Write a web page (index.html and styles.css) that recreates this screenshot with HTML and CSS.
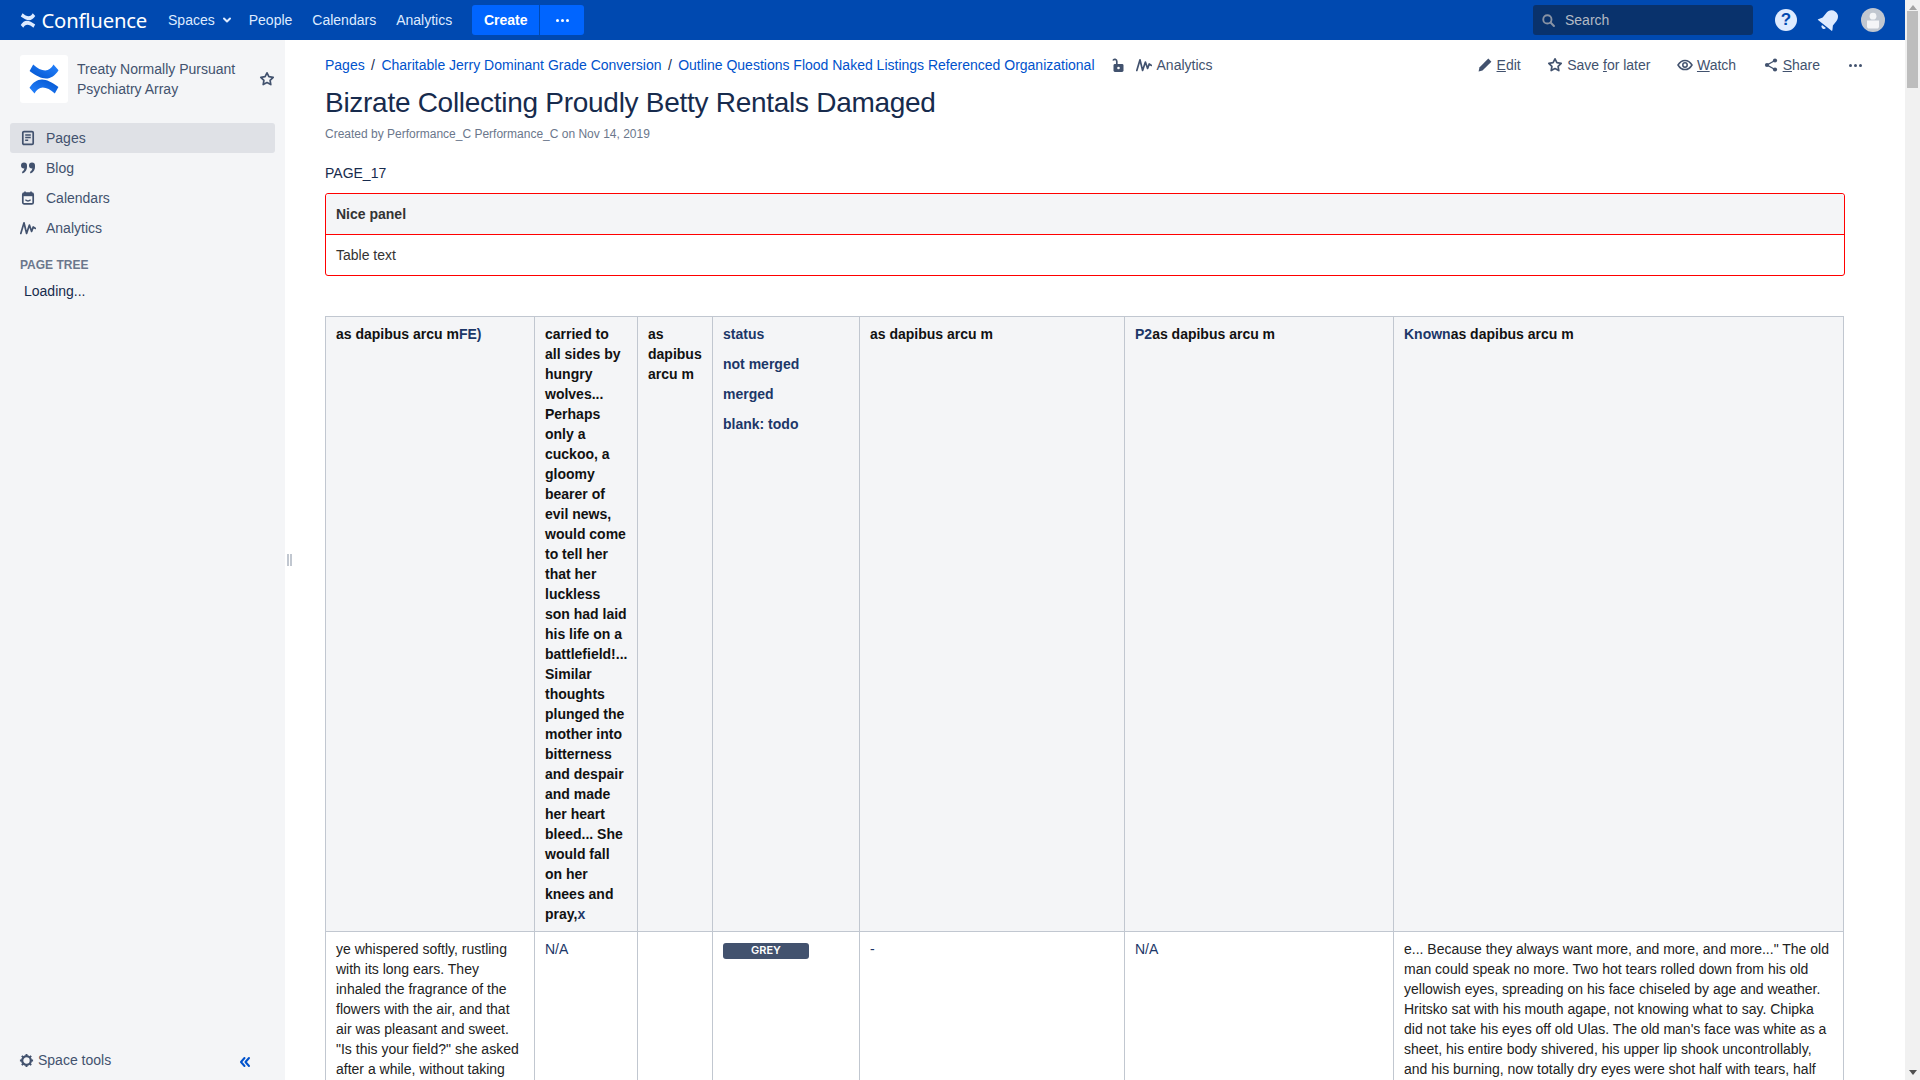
FILE: index.html
```html
<!DOCTYPE html>
<html lang="en">
<head>
<meta charset="utf-8">
<title>Bizrate Collecting Proudly Betty Rentals Damaged</title>
<link rel="stylesheet" href="styles.css">
</head>
<body>
<svg class="defs" width="0" height="0" aria-hidden="true">
  <defs>
    <linearGradient id="cf" x1="0" y1="1" x2="1" y2="0">
      <stop offset="0" stop-color="#0052cc"/><stop offset="1" stop-color="#2684ff"/>
    </linearGradient>
    <symbol id="i-conf" viewBox="0 0 30 30">
      <path d="M4.200 .4 L.6 7 C7 11.800 12.500 14.500 17 14.500 C21.800 14.500 26.200 11.500 29.500 6.200 L24.500 .4 C22.500 4 19.800 6.400 16.200 6.400 C12.500 6.400 8.200 4.200 4.200 .4 Z"/>
      <path transform="rotate(180 15 15)" d="M4.200 .4 L.6 7 C7 11.800 12.500 14.500 17 14.500 C21.800 14.500 26.200 11.500 29.500 6.200 L24.500 .4 C22.500 4 19.800 6.400 16.200 6.400 C12.500 6.400 8.200 4.200 4.200 .4 Z"/>
    </symbol>
    <symbol id="i-analytics" viewBox="0 0 16 16"><path d="M.8 13.500 L4 2.800 L6.600 13.500 L9.400 5 L11.600 11.500 L13.200 7 L15.400 8.400" fill="none" stroke="currentColor" stroke-width="1.700" stroke-linecap="round" stroke-linejoin="round"/></symbol>
    <symbol id="i-star" viewBox="0 0 16 16"><path d="M8 1.800l1.900 3.900 4.300.6-3.100 3 .7 4.300L8 11.600l-3.800 2 .7-4.300-3.100-3 4.300-.6z" fill="none" stroke="currentColor" stroke-width="1.700" stroke-linejoin="round"/></symbol>
  </defs>
</svg>
<div class="window">
  <div class="app">
    <header class="topbar">
      <a class="brand">
        <svg class="brand-mark"><use href="#i-conf"/></svg>
        <span class="brand-name">Confluence</span>
      </a>
      <nav class="topnav">
        <a class="topnav-item">Spaces
          <svg class="caret" viewBox="0 0 10 10"><path d="M2 3.500l3 3 3-3" fill="none" stroke="currentColor" stroke-width="2" stroke-linecap="round" stroke-linejoin="round"/></svg>
        </a>
        <a class="topnav-item">People</a>
        <a class="topnav-item">Calendars</a>
        <a class="topnav-item">Analytics</a>
      </nav>
      <div class="create-group">
        <button class="create-btn">Create</button>
        <button class="create-more"><span class="dots"><i></i><i></i><i></i></span></button>
      </div>
      <div class="top-right">
        <div class="search">
          <svg class="search-icon" viewBox="0 0 16 16"><circle cx="6.800" cy="6.800" r="4.400" fill="none" stroke="currentColor" stroke-width="2"/><path d="M10.200 10.200l3.600 3.600" stroke="currentColor" stroke-width="2.200" stroke-linecap="round"/></svg>
          <span class="search-text">Search</span>
        </div>
        <span class="help">?</span>
        <svg class="bell" viewBox="0 0 24 24"><g transform="rotate(38 12 12)" fill="#deebff"><path d="M12 1.500c-4.200 0-6.500 3-6.500 7.200v5.300L3 18v.8h18V18l-2.500-4V8.700c0-4.200-2.300-7.200-6.500-7.200z"/><path d="M9.500 20.200h5a2.500 2.500 0 0 1-5 0z"/></g></svg>
        <svg class="avatar" viewBox="0 0 24 24"><circle cx="12" cy="12" r="12" fill="#c1c7d0"/><circle cx="12" cy="8.200" r="3.400" fill="#f4f5f7"/><path d="M6 12.600h12V19a5 5 0 0 1-1 1.400H7A5 5 0 0 1 6 19z" fill="#f4f5f7"/></svg>
      </div>
    </header>
    <div class="workspace">
      <aside class="sidebar">
        <div class="space-head">
          <div class="space-logo"><svg class="space-mark"><use href="#i-conf"/></svg></div>
          <div class="space-name">Treaty Normally Pursuant Psychiatry Array</div>
          <svg class="space-star"><use href="#i-star"/></svg>
        </div>
        <nav class="side-nav">
          <a class="side-item is-active">
            <svg class="side-icon" viewBox="0 0 16 16"><rect x="2.800" y="1.600" width="10.400" height="12.800" rx="1.200" fill="none" stroke="currentColor" stroke-width="1.700"/><path d="M5.200 5h5.600M5.200 7.600h5.600M5.200 10.200h3" stroke="currentColor" stroke-width="1.500"/></svg>
            <span>Pages</span>
          </a>
          <a class="side-item">
            <svg class="side-icon" viewBox="0 0 16 16"><g fill="currentColor"><circle cx="4" cy="5.400" r="3"/><circle cx="12" cy="5.400" r="3"/><path d="M4.600 6h2.400c.2 3.600-1.200 6.200-4.400 7.400l-.7-1.400C3.800 11 4.700 9 4.600 6zM12.600 6H15c.2 3.600-1.200 6.200-4.400 7.400l-.7-1.400c1.900-1 2.800-3 2.700-6z"/></g></svg>
            <span>Blog</span>
          </a>
          <a class="side-item">
            <svg class="side-icon" viewBox="0 0 16 16"><rect x="2.800" y="3" width="10.400" height="10.800" rx="1.400" fill="none" stroke="currentColor" stroke-width="1.700"/><path d="M3 3h10v3.200H3z" fill="currentColor"/><path d="M5 1.600v2.400M11 1.600v2.400" stroke="currentColor" stroke-width="1.600"/><path d="M5.400 9.800c1.400 1.200 3.800 1.200 5.200 0" fill="none" stroke="currentColor" stroke-width="1.400"/></svg>
            <span>Calendars</span>
          </a>
          <a class="side-item">
            <svg class="side-icon"><use href="#i-analytics"/></svg>
            <span>Analytics</span>
          </a>
        </nav>
        <div class="tree-title">PAGE TREE</div>
        <div class="tree-loading">Loading...</div>
        <div class="side-foot">
          <a class="space-tools">
            <svg class="gear" viewBox="0 0 16 16"><circle cx="8" cy="8" r="4.600" fill="none" stroke="currentColor" stroke-width="2.400"/><path d="M8 1v2.400M8 12.600V15M1 8h2.400M12.600 8H15M3 3l1.700 1.700M11.300 11.300L13 13M13 3l-1.700 1.700M4.700 11.300L3 13" stroke="currentColor" stroke-width="2"/></svg>
            <span>Space tools</span>
          </a>
          <svg class="collapse" viewBox="0 0 14 14"><path d="M6.500 3L3 7l3.500 4M11 3L7.500 7l3.500 4" fill="none" stroke="currentColor" stroke-width="2" stroke-linecap="round" stroke-linejoin="round"/></svg>
        </div>
      </aside>
      <div class="splitter"><i></i><i></i></div>
      <main class="main">
        <div class="page-top">
          <div class="crumbs">
            <a class="crumb">Pages</a><span class="crumb-sep">/</span>
            <a class="crumb">Charitable Jerry Dominant Grade Conversion</a><span class="crumb-sep">/</span>
            <a class="crumb">Outline Questions Flood Naked Listings Referenced Organizational</a>
            <svg class="lock" viewBox="0 0 16 16"><path d="M6.800 7V4.300a2 2 0 0 0-3.800-.8" fill="none" stroke="currentColor" stroke-width="1.700"/><rect x="3.500" y="7" width="10" height="8" rx="1.400" fill="currentColor"/><circle cx="8.500" cy="11" r="1.300" fill="#fff"/></svg>
            <svg class="crumb-analytics"><use href="#i-analytics"/></svg>
            <span class="crumb-text">Analytics</span>
          </div>
          <div class="actions">
            <a class="action">
              <svg class="action-icon" viewBox="0 0 16 16"><path d="M11.300 1.600l3.100 3.100-8.900 8.900-3.900.9.800-4z" fill="currentColor"/></svg>
              <span><u>E</u>dit</span>
            </a>
            <a class="action">
              <svg class="action-icon"><use href="#i-star"/></svg>
              <span>Save <u>f</u>or later</span>
            </a>
            <a class="action">
              <svg class="action-icon" viewBox="0 0 16 16"><path d="M1 8c1.800-3 4.200-4.600 7-4.600S13.200 5 15 8c-1.800 3-4.200 4.600-7 4.600S2.800 11 1 8z" fill="none" stroke="currentColor" stroke-width="1.500"/><circle cx="8" cy="8" r="2.200" fill="none" stroke="currentColor" stroke-width="1.500"/></svg>
              <span><u>W</u>atch</span>
            </a>
            <a class="action">
              <svg class="action-icon" viewBox="0 0 16 16"><path d="M12 3.500L4 8l8 4.500" fill="none" stroke="currentColor" stroke-width="1.400"/><circle cx="12" cy="3.500" r="2.100" fill="currentColor"/><circle cx="4" cy="8" r="2.100" fill="currentColor"/><circle cx="12" cy="12.500" r="2.100" fill="currentColor"/></svg>
              <span><u>S</u>hare</span>
            </a>
            <a class="action action-more"><span class="dots dots-dark"><i></i><i></i><i></i></span></a>
          </div>
        </div>
        <h1 class="title">Bizrate Collecting Proudly Betty Rentals Damaged</h1>
        <p class="byline">Created by Performance_C Performance_C on Nov 14, 2019</p>
        <p class="label">PAGE_17</p>
        <section class="panel">
          <div class="panel-head">Nice panel</div>
          <div class="panel-body">Table text</div>
        </section>
        <table class="grid">
          <colgroup>
            <col class="c1"><col class="c2"><col class="c3"><col class="c4"><col class="c5"><col class="c6"><col class="c7">
          </colgroup>
          <tr>
            <th>as dapibus arcu m<a class="th-link">FE)</a></th>
            <th>carried to all sides by hungry wolves... Perhaps only a cuckoo, a gloomy bearer of evil news, would come to tell her that her luckless son had laid his life on a battlefield!... Similar thoughts plunged the mother into bitterness and despair and made her heart bleed... She would fall on her knees and pray,<a class="th-link">x</a></th>
            <th>as dapibus arcu m</th>
            <th class="status-cell">
              <p class="th-link">status</p>
              <p class="th-link">not merged</p>
              <p class="th-link">merged</p>
              <p class="th-link">blank: todo</p>
            </th>
            <th>as dapibus arcu m</th>
            <th><a class="th-link">P2</a>as dapibus arcu m</th>
            <th><a class="th-link">Known</a>as dapibus arcu m</th>
          </tr>
          <tr>
            <td>ye whispered softly, rustling with its long ears. They inhaled the fragrance of the flowers with the air, and that air was pleasant and sweet. "Is this your field?" she asked after a while, without taking</td>
            <td><a class="td-link">N/A</a></td>
            <td></td>
            <td><span class="lozenge">GREY</span></td>
            <td class="td-dash">-</td>
            <td><a class="td-link">N/A</a></td>
            <td>e... Because they always want more, and more, and more..." The old man could speak no more. Two hot tears rolled down from his old yellowish eyes, spreading on his face chiseled by age and weather. Hritsko sat with his mouth agape, not knowing what to say. Chipka did not take his eyes off old Ulas. The old man's face was white as a sheet, his entire body shivered, his upper lip shook uncontrollably, and his burning, now totally dry eyes were shot half with tears, half</td>
          </tr>
        </table>
      </main>
    </div>
  </div>
  <div class="scrollbar">
    <span class="arrow-up"></span>
    <span class="thumb"></span>
    <span class="arrow-down"></span>
  </div>
</div>
</body>
</html>
```
FILE: styles.css
```css
* { box-sizing: border-box; }
html, body { margin: 0; height: 100%; overflow: hidden; }
body { font: 14px/20px "Liberation Sans", Arial, sans-serif; color: #172b4d; background: #fff; }
.defs { position: absolute; }
p { margin: 0; }
.window { display: flex; height: 100vh; }
.app { flex: 1; min-width: 0; display: flex; flex-direction: column; }

/* top bar */
.topbar { height: 40px; flex: none; display: flex; align-items: center; background: #0049b0; color: #deebff; padding-left: 20px; }
.brand { display: flex; align-items: center; color: #fff; }
.brand-mark { width: 16px; height: 15px; fill: #deebff; }
.brand-name { font: 400 20.3px/40px "Noto Sans", sans-serif; margin-left: 5.5px; letter-spacing: -.2px; color: #fff; }
.topnav { display: flex; margin-left: 21px; gap: 20px; }
.topnav-item { display: flex; align-items: center; }
.caret { width: 10px; height: 10px; margin-left: 7px; margin-right: -3px; }
.create-group { display: flex; margin-left: 20px; gap: 1px; }
.create-btn, .create-more { height: 30px; border: 0; padding: 0; background: #0065ff; color: #fff; font: 700 14px "Liberation Sans", Arial, sans-serif; }
.create-btn { width: 67px; border-radius: 3px 0 0 3px; }
.create-more { width: 44px; border-radius: 0 3px 3px 0; display: flex; align-items: center; justify-content: center; }
.dots { display: flex; gap: 2px; }
.dots i { width: 3px; height: 3px; border-radius: 50%; background: #fff; }
.dots-dark i { background: #42526e; }
.top-right { margin-left: auto; display: flex; align-items: center; padding-right: 20px; }
.search { width: 220px; height: 30px; border-radius: 3px; background: #09326c; display: flex; align-items: center; padding-left: 8px; color: #b3bac5; }
.search-icon { width: 15px; height: 15px; color: #8993a4; }
.search-text { margin-left: 9px; }
.help { width: 22px; height: 22px; margin-left: 22px; border-radius: 50%; background: #deebff; color: #0049b0; font: 700 17px/22px "Liberation Sans", Arial, sans-serif; text-align: center; }
.bell { width: 24px; height: 24px; margin-left: 20px; }
.avatar { width: 24px; height: 24px; margin-left: 20px; }

/* layout */
.workspace { flex: 1; min-height: 0; display: flex; position: relative; }
.sidebar { width: 285px; flex: none; background: #f4f5f7; display: flex; flex-direction: column; color: #42526e; }
.space-head { display: flex; align-items: center; margin-top: 15px; padding-left: 20px; }
.space-logo { width: 48px; height: 48px; flex: none; background: #fff; border-radius: 3px; display: flex; align-items: center; justify-content: center; }
.space-mark { width: 30px; height: 30px; fill: url(#cf); }
.space-name { width: 170px; margin-left: 9px; }
.space-star { width: 16px; height: 16px; margin-left: 12px; color: #42526e; }
.side-nav { margin-top: 20px; padding: 0 10px; }
.side-item { height: 30px; display: flex; align-items: center; gap: 10px; padding-left: 10px; border-radius: 3px; }
.side-item.is-active { background: #dfe1e6; }
.side-icon { width: 16px; height: 16px; flex: none; }
.tree-title { margin-top: 14px; padding-left: 20px; font: 700 12px/16px "Liberation Sans", Arial, sans-serif; color: #6b778c; }
.tree-loading { margin-top: 8px; padding-left: 24px; color: #172b4d; }
.side-foot { margin-top: auto; display: flex; align-items: center; justify-content: space-between; padding: 0 33px 10px 19px; }
.space-tools { display: flex; align-items: center; gap: 4px; }
.gear { width: 15px; height: 15px; }
.collapse { width: 14px; height: 14px; color: #0052cc; margin-top: 4px; }
.splitter { position: absolute; left: 287px; top: 514px; display: flex; gap: 1px; }
.splitter i { width: 2px; height: 12px; background: #c1c7d0; }

/* main */
.main { flex: 1; min-width: 0; overflow: hidden; padding: 0 60px 0 40px; }
.page-top { display: flex; justify-content: space-between; padding-top: 15px; margin-right: -18px; }
.crumbs { display: flex; align-items: center; color: #42526e; }
.crumb { color: #0052cc; }
.crumb-sep { margin: 0 6.4px; color: #172b4d; }
.lock { width: 16px; height: 16px; margin-left: 15px; color: #42526e; }
.crumb-analytics { width: 16px; height: 16px; margin-left: 10px; color: #42526e; }
.crumb-text { margin-left: 5px; }
.actions { display: flex; align-items: center; gap: 26.5px; color: #42526e; }
.action { display: flex; align-items: center; gap: 4px; }
.action-icon { width: 16px; height: 16px; }
.action-more { width: 16px; margin-left: .5px; justify-content: center; }
.title { margin: 12px 0 0; font: 400 28px/32px "Liberation Sans", Arial, sans-serif; letter-spacing: -.01em; color: #172b4d; }
.byline { margin-top: 7px; font-size: 12px; line-height: 16px; color: #6b778c; }
.label { margin-top: 21px; color: #172b4d; }
.panel { margin-top: 10px; border: 1px solid #f00; border-radius: 3px; color: #333; }
.panel-head { padding: 10px 8px 10px 10px; background: #f4f5f7; border-bottom: 1px solid #f00; font-weight: 700; border-radius: 3px 3px 0 0; }
.panel-body { padding: 10px; }
.grid { margin-top: 40px; border-collapse: collapse; table-layout: fixed; width: 1518px; color: #222; }
.c1 { width: 209px; }
.c2 { width: 103px; }
.c3 { width: 75px; }
.c4 { width: 147px; }
.c5 { width: 265px; }
.c6 { width: 269px; }
.c7 { width: 450px; }
.grid th, .grid td { border: 1px solid #c1c7d0; padding: 7px 10px; vertical-align: top; text-align: left; }
.grid th { background: #f4f5f7; font-weight: 700; color: #111; }
.status-cell p + p { margin-top: 10px; }
.th-link { color: #1c3768; }
.td-link, .grid .td-dash { color: #1c3768; }
.lozenge { display: block; width: 86px; height: 16px; margin-top: 4px; border-radius: 3px; background: #42526e; color: #fff; font: 600 11px/15px "Inter", "Liberation Sans", sans-serif; text-align: center; }

/* scrollbar */
.scrollbar { width: 15px; flex: none; background: #f1f1f1; position: relative; display: flex; flex-direction: column; align-items: center; }
.arrow-up { width: 0; height: 0; margin-top: 5px; border: 4px solid transparent; border-top: 0; border-bottom: 5px solid #a3a3a3; }
.thumb { width: 11px; height: 77px; margin-top: 1px; background: #bdbdbd; }
.arrow-down { width: 0; height: 0; margin-top: auto; margin-bottom: 5px; border: 4px solid transparent; border-bottom: 0; border-top: 5px solid #505050; }
```
